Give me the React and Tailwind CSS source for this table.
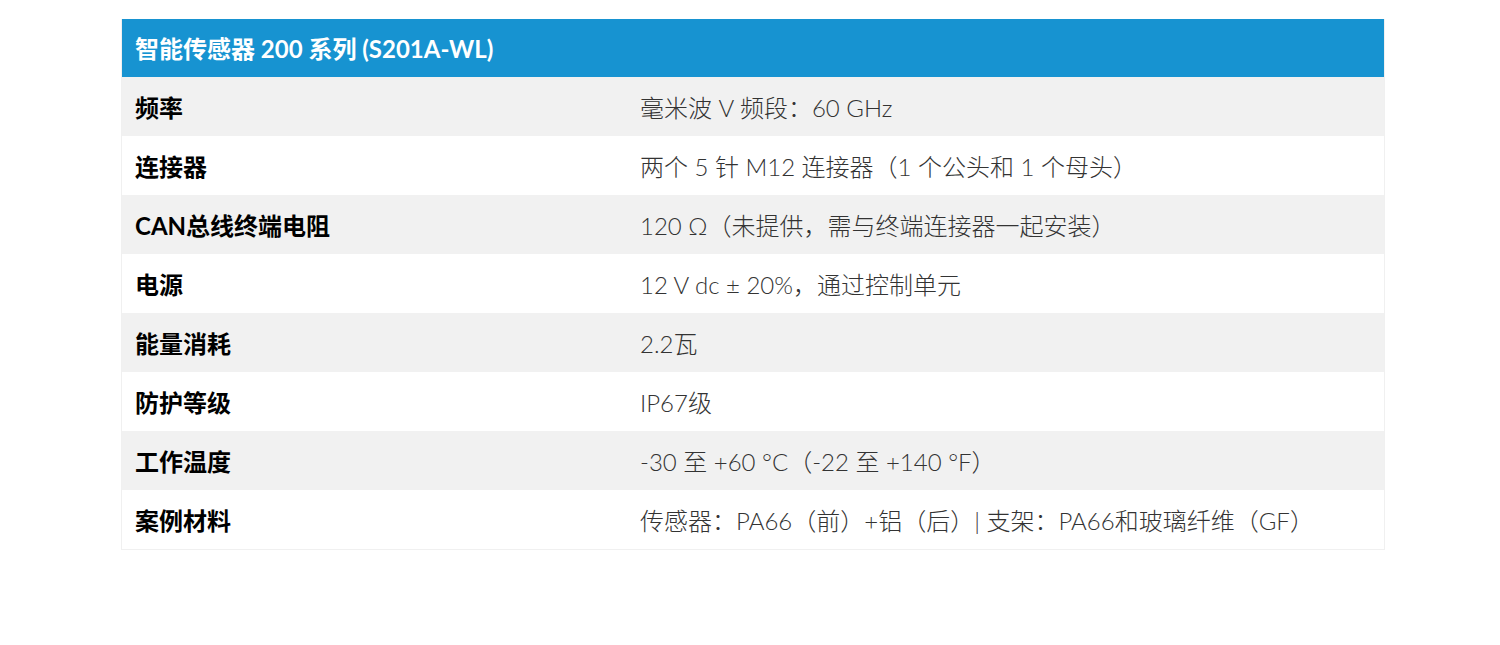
export default function App() {

  // SPEC ROWS
  const rows = [
    ["频率", "毫米波 V 频段：60 GHz"],
    ["连接器", "两个 5 针 M12 连接器（1 个公头和 1 个母头）"],
    ["CAN总线终端电阻", "120 Ω（未提供，需与终端连接器一起安装）"],
    ["电源", "12 V dc ± 20%，通过控制单元"],
    ["能量消耗", "2.2瓦"],
    ["防护等级", "IP67级"],
    ["工作温度", "-30 至 +60 °C（-22 至 +140 °F）"],
    ["案例材料", "传感器：PA66（前）+铝（后）| 支架：PA66和玻璃纤维（GF）"],
  ];

  return (
    <main
      className="min-h-screen bg-white pt-[19px] px-[121px]"
      style={{ fontFamily: 'Lato, "Noto Sans CJK SC", sans-serif' }}
    >

      {/* TABLE */}
      <div className="w-[1264px] border border-[#f0f0f0] border-t-0">

        {/* HEADER */}
        <div className="h-[58px] bg-[#1793d1] flex items-center px-[13px] pt-[2px]">
          <h2 className="text-white text-[24px] font-bold">
            智能传感器 200 系列 (S201A-WL)
          </h2>
        </div>

        {/* ROWS */}
        {rows.map(([label, value], i) => (
          <div
            key={i}
            className={`grid grid-cols-[505px_1fr] items-center h-[59px] px-[13px] pt-[3px] ${
              i % 2 === 0 ? "bg-[#f1f1f1]" : "bg-white"
            }`}
          >
            <div className="text-[24px] font-bold text-black">
              {label}
            </div>
            <div className="text-[24px] font-light text-[#333]">
              {value}
            </div>
          </div>
        ))}

      </div>

    </main>
  );
}
